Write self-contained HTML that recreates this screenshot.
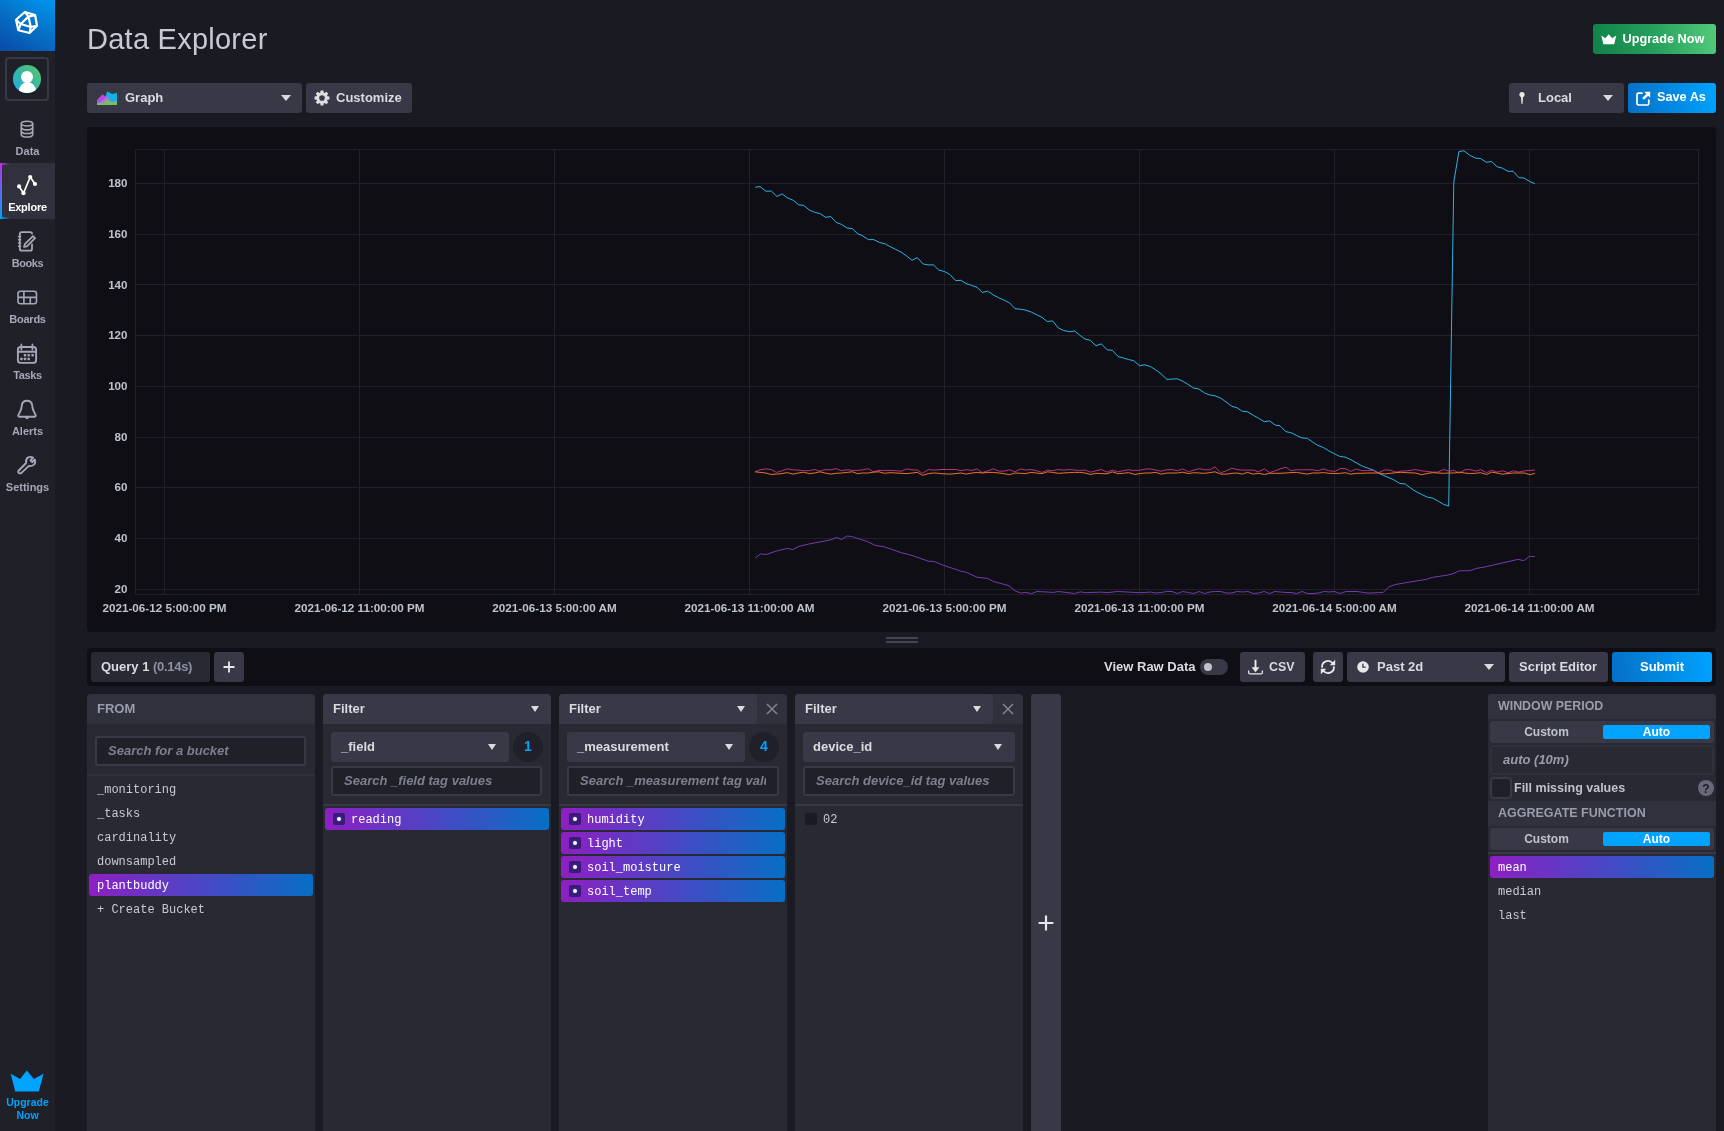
<!DOCTYPE html>
<html><head><meta charset="utf-8">
<style>
*{box-sizing:border-box;margin:0;padding:0}
html,body{width:1724px;height:1131px;overflow:hidden;-webkit-font-smoothing:antialiased;background:#1a1a22;font-family:"Liberation Sans",sans-serif;color:#c6cad3}
.a{position:absolute}
#root{position:absolute;left:0;top:0;width:1724px;height:1131px;will-change:transform}
.sb{left:0;top:0;width:55px;height:1131px;background:#202028}
.nav{left:0;width:55px;text-align:center;font-weight:bold;font-size:11px;color:#a4a8b6}
.nav .lb{position:absolute;left:0;width:55px;text-align:center;line-height:12px}
.btn{background:#383846;border-radius:3px}
.txt13{font-size:13px;font-weight:bold;line-height:15px;white-space:nowrap}
.panel{background:#292933;border-radius:4px 4px 0 0;top:694px;height:437px;width:228px}
.phdr{left:0;top:0;width:100%;height:30px;background:#31313d;border-radius:4px 4px 0 0}
.dd{background:#383846;border-radius:3px}
.inp{border:2px solid #383846;background:#202028;border-radius:3px}
.mono{font-family:"Liberation Mono",monospace;font-size:12px;white-space:nowrap}
.sel{background:linear-gradient(90deg,#8e1fc3,#066fc5);border-radius:3px}
.caret{width:0;height:0;border-left:5px solid transparent;border-right:5px solid transparent;border-top:6px solid #d9dbe1}
.ylab{left:60px;width:67.5px;text-align:right;font-size:11.6px;font-weight:bold;line-height:15px;color:#bec2cc}
.xlab{top:600px;width:200px;text-align:center;font-size:11.7px;font-weight:bold;line-height:15px;color:#bec2cc}
</style></head><body><div id="root">

<!-- SIDEBAR -->
<div class="a sb"></div>
<div class="a" style="left:0;top:0;width:55px;height:51px;background:linear-gradient(30deg,#0a4aa6 0%,#066fc5 50%,#0098f0 100%)"></div>
<svg class="a" style="left:0;top:0" width="55" height="51" viewBox="0 0 55 51">
 <g fill="none" stroke="#fff" stroke-width="2.2" stroke-linejoin="round">
  <path d="M24.86 11.97 L35.08 15.06 L37.00 25.80 L29.57 33.02 L18.36 30.23 L16.04 19.80 Z"/>
  <path d="M28.42 16.61 L30.80 27.04 L20.68 24.04 Z"/>
  <path d="M24.86 11.97 L28.42 16.61 L35.08 15.06 M16.04 19.80 L20.68 24.04 L18.36 30.23 M37.00 25.80 L30.80 27.04 L29.57 33.02"/>
 </g>
</svg>
<div class="a" style="left:5px;top:57px;width:44px;height:44px;border:2px solid #383846;border-radius:4px"></div>
<div class="a" style="left:13px;top:65px;width:28px;height:28px;border-radius:50%;background:linear-gradient(225deg,#5ecb6b 0%,#34b8a0 50%,#22adf6 100%);overflow:hidden">
 <div class="a" style="left:8px;top:5.5px;width:12px;height:12px;border-radius:50%;background:#fff"></div>
 <div class="a" style="left:5.5px;top:16.5px;width:17px;height:18px;border-radius:50%;background:#fff"></div>
 <div class="a" style="left:12px;top:15px;width:4px;height:3px;background:#fff"></div>
</div>

<!-- nav: Data -->
<svg class="a" style="left:17px;top:119px" width="20" height="20" viewBox="0 0 20 20">
 <g fill="none" stroke="#a4a8b6" stroke-width="1.6">
  <ellipse cx="10" cy="4.6" rx="5.7" ry="2.4"/>
  <path d="M4.3 4.6 V15.4 C4.3 16.9 6.8 18 10 18 C13.2 18 15.7 16.9 15.7 15.4 V4.6"/>
  <path d="M4.3 8.3 C4.3 9.8 6.8 10.9 10 10.9 C13.2 10.9 15.7 9.8 15.7 8.3"/>
  <path d="M4.3 11.9 C4.3 13.4 6.8 14.5 10 14.5 C13.2 14.5 15.7 13.4 15.7 11.9"/>
 </g>
</svg>
<div class="a nav" style="top:145px"><span class="lb">Data</span></div>

<!-- nav: Explore (active) -->
<div class="a" style="left:0;top:163px;width:55px;height:56px;background:#31313d"></div>
<div class="a" style="left:0;top:163px;width:2px;height:56px;background:linear-gradient(180deg,#be2ee4,#00a3ff)"></div>
<div class="a" style="left:0;top:163px;width:10px;height:2px;background:linear-gradient(90deg,#be2ee4,rgba(190,46,228,0))"></div>
<div class="a" style="left:0;top:217px;width:10px;height:2px;background:linear-gradient(90deg,#00a3ff,rgba(0,163,255,0))"></div>
<svg class="a" style="left:15px;top:173px" width="24" height="24" viewBox="0 0 24 24">
 <g fill="#fff" stroke="none">
  <path d="M4.1 13.4 L8.5 20.2 L15.2 4 L20 11" fill="none" stroke="#fff" stroke-width="1.7" stroke-linejoin="round"/>
  <circle cx="4.1" cy="13.4" r="2.1"/><circle cx="8.5" cy="20.2" r="2.1"/><circle cx="15.2" cy="4" r="2.1"/><circle cx="20" cy="11" r="2.1"/>
 </g>
</svg>
<div class="a nav" style="top:201px;color:#fff"><span class="lb" style="letter-spacing:-0.23px">Explore</span></div>

<!-- nav: Books -->
<svg class="a" style="left:12px;top:226px" width="30" height="30" viewBox="0 0 30 30">
 <g fill="none" stroke="#a4a8b6" stroke-width="1.8" stroke-linejoin="round" stroke-linecap="round">
  <path d="M20 7.6 Q20 6.1 18 6.1 H9.8 Q7.8 6.1 7.8 8.1 V22.7 Q7.8 24.7 9.8 24.7 H18 Q20 24.7 20 22.7 V18.4"/>
  <path d="M12.1 21 L12.81 18.17 L20.94 10.04 L23.06 12.16 L14.93 20.29 Z"/>
 </g>
 <g stroke="#a4a8b6" stroke-width="1.5" stroke-linecap="round"><path d="M6.6 10.6 H8.6 M6.6 13.8 H8.6 M6.6 17 H8.6 M6.6 20.2 H8.6"/></g>
</svg>
<div class="a nav" style="top:257px"><span class="lb" style="letter-spacing:-0.44px">Books</span></div>

<!-- nav: Boards -->
<svg class="a" style="left:16px;top:287px" width="22" height="20" viewBox="0 0 22 20">
 <g fill="none" stroke="#a4a8b6" stroke-width="1.6" stroke-linejoin="round">
  <rect x="2" y="4.2" width="18.5" height="12.5" rx="2.5"/>
  <path d="M2 10.4 H20.5 M7.9 4.2 V16.7 M14.3 10.4 V16.7"/>
 </g>
</svg>
<div class="a nav" style="top:313px"><span class="lb" style="letter-spacing:-0.23px">Boards</span></div>

<!-- nav: Tasks -->
<svg class="a" style="left:12px;top:338px" width="30" height="30" viewBox="0 0 30 30">
 <g fill="none" stroke="#a4a8b6" stroke-width="1.9" stroke-linejoin="round" stroke-linecap="round">
  <rect x="5.9" y="9" width="18.2" height="15.9" rx="2.6"/>
  <path d="M5.9 13.7 H24.1"/>
  <path d="M9.4 6.4 V11.6 M20.4 6.4 V11.6" stroke-width="1.7"/>
 </g>
 <g fill="#a4a8b6"><rect x="11.8" y="16.0" width="2.4" height="2.4" rx="0.4"/><rect x="15.5" y="16.0" width="2.4" height="2.4" rx="0.4"/><rect x="19.4" y="16.0" width="2.4" height="2.4" rx="0.4"/><rect x="8.2" y="19.8" width="2.4" height="2.4" rx="0.4"/><rect x="11.8" y="19.8" width="2.4" height="2.4" rx="0.4"/><rect x="15.5" y="19.8" width="2.4" height="2.4" rx="0.4"/></g>
</svg>
<div class="a nav" style="top:369px"><span class="lb" style="letter-spacing:-0.38px">Tasks</span></div>

<!-- nav: Alerts -->
<svg class="a" style="left:12px;top:394px" width="30" height="30" viewBox="0 0 30 30">
 <g fill="none" stroke="#a4a8b6" stroke-width="1.9" stroke-linejoin="round">
  <path d="M7.9 22.8 H22.1 Q24.4 22.8 23.5 20.8 L21.7 17.2 Q20.4 14.6 20.2 11.5 Q19.8 6.8 15 6.8 Q10.2 6.8 9.8 11.5 Q9.6 14.6 8.3 17.2 L6.5 20.8 Q5.6 22.8 7.9 22.8 Z"/>
 </g>
 <path d="M13.1 22.8 Q13.3 25.3 15 25.3 Q16.7 25.3 16.9 22.8 Z" fill="#a4a8b6"/>
</svg>
<div class="a nav" style="top:425px"><span class="lb">Alerts</span></div>

<!-- nav: Settings -->
<svg class="a" style="left:12px;top:450px" width="30" height="30" viewBox="0 0 30 30">
 <g fill="none" stroke="#a4a8b6" stroke-width="1.9" stroke-linejoin="round" stroke-linecap="round">
  <path d="M7.3 23.2 Q6.0 23.0 6.3 21.0 L14.1 13.0 Q13.6 8.8 16.2 7.4 Q18.6 6.3 21.0 7.6 L18.5 10.3 L20.2 12.0 L22.7 9.4 Q24.0 12.5 22.0 14.6 Q19.7 16.6 16.9 15.9 L8.9 23.4 Q8.2 23.5 7.3 23.2 Z"/>
 </g>
</svg>
<div class="a nav" style="top:481px"><span class="lb">Settings</span></div>

<!-- sidebar upgrade -->
<svg class="a" style="left:10px;top:1069px" width="34" height="24" viewBox="0 0 34 24">
 <path d="M0.7 4.8 L10.1 9.9 L16.8 1.4 L23.75 9.9 L33.5 4.8 L28.8 22.6 H5.2 Z" fill="#00a3ff"/>
</svg>
<div class="a" style="left:0;top:1096px;width:55px;text-align:center;font-weight:bold;font-size:10.5px;line-height:13px;color:#00a3ff">Upgrade<br>Now</div>
<!-- HEADER -->
<div class="a" style="left:87px;top:22px;font-size:29px;line-height:34px;letter-spacing:0.25px;color:#c6cad3;white-space:nowrap">Data Explorer</div>
<div class="a" style="left:1593px;top:24px;width:123px;height:30px;border-radius:3px;background:linear-gradient(80deg,#0f8148 0%,#27a05c 50%,#52cb7a 100%)"></div>
<svg class="a" style="left:1601px;top:34px" width="16" height="11" viewBox="0 0 16 11">
 <path d="M0.3 1.6 L4.3 4.3 L7.7 0.2 L11.2 4.3 L15.2 1.6 L13.2 10.3 H2.4 Z" fill="#fff"/>
</svg>
<div class="a txt13" style="left:1622.5px;top:32px;font-size:12.7px;color:#fff">Upgrade Now</div>

<!-- TOOLBAR -->
<div class="a btn" style="left:87px;top:83px;width:215px;height:30px"></div>
<svg class="a" style="left:97px;top:91px" width="20" height="14" viewBox="0 0 20 14">
 <path d="M8.3 6 L10.3 0.3 L12 1.5 L15.5 3 L20 1.8 V14 H8.3 Z" fill="#12b2e6"/>
 <path d="M0 9 L5.5 3.3 L7.5 5 L10 5.5 L13 9 L15 11.5 L0 14 Z" fill="#b84be0"/>
 <path d="M0 12.5 L4 10.5 L7 8 L10 5.2 L13 9 L15 11.5 L17 10 L20 10 V14 H0 Z" fill="#a87ae0"/>
 <path d="M0 11.8 L4 12 L6 12.3 L10 8.8 L13 10.3 L15 11.2 L18 10.8 L20 10.2 V14 H0 Z" fill="#74c45e"/>
</svg>
<div class="a txt13" style="left:125px;top:90px;color:#d9dbe1">Graph</div>
<div class="a caret" style="left:281px;top:95px"></div>

<div class="a btn" style="left:306px;top:83px;width:106px;height:30px"></div>
<svg class="a" style="left:313px;top:89.2px" width="18" height="18" viewBox="0 0 18 18">
 <path fill="#dcdee4" fill-rule="evenodd" d="M7.32 3.55 L7.56 1.54 L10.44 1.54 L10.68 3.55 L11.66 3.96 L13.26 2.71 L15.29 4.74 L14.04 6.34 L14.45 7.32 L16.46 7.56 L16.46 10.44 L14.45 10.68 L14.04 11.66 L15.29 13.26 L13.26 15.29 L11.66 14.04 L10.68 14.45 L10.44 16.46 L7.56 16.46 L7.32 14.45 L6.34 14.04 L4.74 15.29 L2.71 13.26 L3.96 11.66 L3.55 10.68 L1.54 10.44 L1.54 7.56 L3.55 7.32 L3.96 6.34 L2.71 4.74 L4.74 2.71 L6.34 3.96 Z M11.8 9 A2.8 2.8 0 1 0 6.2 9 A2.8 2.8 0 1 0 11.8 9 Z"/>
</svg>
<div class="a txt13" style="left:336px;top:90px;color:#d9dbe1">Customize</div>

<div class="a btn" style="left:1509px;top:83px;width:115px;height:30px"></div>
<svg class="a" style="left:1516.5px;top:91px" width="10" height="14" viewBox="0 0 10 14">
 <circle cx="5" cy="3.5" r="2.6" fill="#e7e8eb"/><path d="M3.9 4 H6.1 L5.6 12.6 Q5 13.2 4.4 12.6 Z" fill="#e7e8eb"/>
</svg>
<div class="a txt13" style="left:1538px;top:90px;color:#d9dbe1">Local</div>
<div class="a caret" style="left:1603px;top:95px"></div>

<div class="a" style="left:1628px;top:83px;width:88px;height:30px;border-radius:3px;background:linear-gradient(80deg,#066fc5 0%,#00a3ff 100%)"></div>
<svg class="a" style="left:1636px;top:91px" width="15" height="15" viewBox="0 0 15 15">
 <g fill="none" stroke="#fff" stroke-width="1.7" stroke-linejoin="round" stroke-linecap="round"><path d="M6 2.2 H2.6 Q1 2.2 1 3.8 V12.4 Q1 14 2.6 14 H11.2 Q12.8 14 12.8 12.4 V9"/></g>
 <path d="M8.2 0.8 H14.2 V6.8 L12.1 4.7 L8 8.8 L6.2 7 L10.3 2.9 Z" fill="#fff"/>
</svg>
<div class="a txt13" style="left:1657px;top:90px;font-size:12.7px;color:#fff">Save As</div>

<!-- CHART -->
<div class="a" style="left:87px;top:127px;width:1629px;height:505px;background:#0f0e15;border-radius:4px"></div>
<svg class="a" style="left:0;top:0" width="1724" height="640" viewBox="0 0 1724 640"><g stroke="#202028" stroke-width="1" fill="none"><rect x="135.5" y="149.5" width="1563" height="445"/><path d="M135.5 589.5 H1698.5"/><path d="M135.5 538.5 H1698.5"/><path d="M135.5 487.5 H1698.5"/><path d="M135.5 437.5 H1698.5"/><path d="M135.5 386.5 H1698.5"/><path d="M135.5 335.5 H1698.5"/><path d="M135.5 284.5 H1698.5"/><path d="M135.5 234.5 H1698.5"/><path d="M135.5 183.5 H1698.5"/><path d="M164.5 149.5 V594.5"/><path d="M359.5 149.5 V594.5"/><path d="M554.5 149.5 V594.5"/><path d="M749.5 149.5 V594.5"/><path d="M944.5 149.5 V594.5"/><path d="M1139.5 149.5 V594.5"/><path d="M1334.5 149.5 V594.5"/><path d="M1529.5 149.5 V594.5"/></g></svg>
<div class="a ylab" style="top:580.8px">20</div><div class="a ylab" style="top:530.1px">40</div><div class="a ylab" style="top:479.4px">60</div><div class="a ylab" style="top:428.6px">80</div><div class="a ylab" style="top:377.9px">100</div><div class="a ylab" style="top:327.2px">120</div><div class="a ylab" style="top:276.5px">140</div><div class="a ylab" style="top:225.8px">160</div><div class="a ylab" style="top:175.0px">180</div><div class="a xlab" style="left:64.5px">2021-06-12 5:00:00 PM</div><div class="a xlab" style="left:259.5px">2021-06-12 11:00:00 PM</div><div class="a xlab" style="left:454.5px">2021-06-13 5:00:00 AM</div><div class="a xlab" style="left:649.5px">2021-06-13 11:00:00 AM</div><div class="a xlab" style="left:844.5px">2021-06-13 5:00:00 PM</div><div class="a xlab" style="left:1039.5px">2021-06-13 11:00:00 PM</div><div class="a xlab" style="left:1234.5px">2021-06-14 5:00:00 AM</div><div class="a xlab" style="left:1429.5px">2021-06-14 11:00:00 AM</div><svg class="a" style="left:0;top:0" width="1724" height="640" viewBox="0 0 1724 640">
<g fill="none" stroke-width="1" stroke-linejoin="round" stroke-opacity="0.92">
<polyline stroke="#31c0f6" points="755.2,187.2 760.1,186.6 765.9,191.2 771.4,191.1 776.9,196.5 782.1,193.9 787.3,197.8 793.1,200.2 798.6,204.8 803.6,205.4 809.4,210 814.6,212.3 819.8,213.5 825.6,217.3 830.8,216.6 836.1,222.4 841.3,224.3 847.1,228 852.3,228.6 857.5,233.6 862.7,235.9 868.5,239.6 873.8,239.6 879.6,242.6 884.8,243.7 890,246.6 895.8,249.5 901,252 906.8,256.1 912,260.3 917.3,257.6 923.1,264 928.3,264.9 933.5,264.9 938.7,270 944.1,271.4 949.9,274.5 955.7,280.6 960.9,280.3 966.1,283.5 971.3,285.3 977.1,287.3 982.3,292.5 987.6,291.1 993.4,295 998.6,297.7 1003.8,300 1009.6,302.9 1014.8,308.5 1020.6,309.3 1025.8,310.1 1031.6,312.2 1036.9,314.8 1042.1,317.4 1047.3,321.5 1052.5,320.9 1058.3,327.9 1063.5,330.5 1069.3,331.7 1074.6,331 1079.8,335.2 1085,339.1 1090.2,340.3 1096,345.8 1101.3,343.8 1107.1,349.9 1112.3,350.3 1118.1,356.5 1123.3,358 1128.5,359.5 1133.7,360.7 1139.6,365.7 1144.9,364.9 1150.7,366.6 1155.9,370.1 1161.1,373.8 1166.9,379.4 1172.1,379.1 1177.3,378.8 1182.6,381.1 1187.8,384.2 1193.6,388.1 1198.8,388.9 1204.6,393 1209.8,395 1215,395.8 1220.8,398.2 1226.1,402 1231.9,406.3 1237.1,407.8 1242.3,411.3 1247.5,411.8 1253.3,415.3 1258.5,418.2 1264.3,421.7 1269.6,420.9 1275.4,425.2 1280,425.8 1285.8,431.6 1291,432.7 1296.3,435.3 1302.1,438 1307.3,438.3 1312.5,442 1317.7,445.3 1323.5,447.6 1328.7,450.7 1334.5,453.8 1339.6,456.3 1345.3,457.2 1351.1,459.8 1356.8,463.2 1362.5,466.2 1368.3,468.3 1373.4,470 1379.1,473.4 1384.9,476 1393.8,479.8 1399.6,483.4 1405.3,484 1410.4,487.9 1416.1,491.7 1421.9,494.6 1427.6,497.2 1432.7,498.1 1438.5,501.3 1443.6,504.4 1448.7,506.1 1453.8,182.1 1458.9,151.5 1464,150.8 1469.7,155.3 1475.5,158.1 1480.6,158.5 1486.3,162.3 1491.4,161.4 1497.2,166.8 1502.3,168.1 1508,171.3 1513.1,171.3 1518.9,177.6 1524,178 1529.7,181.5 1534.8,183.6"/>
<polyline stroke="#7e40c0" points="755.2,558.1 760.7,553.8 765.9,554.6 776.3,551.1 787.3,548.4 792.6,549.6 798.4,546.5 809.4,543.9 820.4,541.8 830.8,539.8 836.6,537.4 841.3,539.5 847.1,536 852.3,536.6 868,541.8 874.9,545.3 884.2,546.8 901.6,552.8 912,555.4 928.3,561.2 934.1,561.5 944.5,565.6 960.9,571.2 966.1,572.2 977.1,577.3 987.6,578.4 993.4,581.5 1009,585.7 1014.8,590.7 1020.6,593 1025.8,592.4 1031.6,593.6 1036.9,591.5 1053.7,592.4 1058.3,591.5 1074.6,593.5 1080.4,591.9 1085,592.7 1101.3,592.1 1107.1,592.7 1117.5,591.5 1139.5,592.7 1144.9,592.5 1150.3,592.0 1155.8,593.0 1161.2,592.5 1166.6,591.5 1172.0,591.5 1177.4,593.5 1182.9,591.5 1188.3,592.5 1193.7,593.5 1199.1,591.5 1204.5,593.5 1210.0,592.0 1215.4,591.5 1220.8,591.5 1226.2,593.0 1231.6,593.0 1237.1,591.5 1242.5,592.0 1247.9,591.5 1253.3,593.5 1258.7,593.0 1264.2,591.5 1269.6,593.5 1275.0,591.5 1280.4,592.0 1285.8,592.5 1291.3,592.5 1296.7,593.5 1302.1,591.5 1307.5,593.5 1312.9,593.5 1318.4,593.0 1323.8,591.5 1329.2,592.0 1334.6,591.5 1340.0,593.5 1340,593.5 1346.1,591.5 1357.1,591.5 1368,593.1 1383.2,592.5 1388.7,587 1394.8,584.6 1410,582 1426.5,579.3 1432.6,577.3 1447.2,575.2 1453.3,573.6 1459.4,570.8 1470.3,570.6 1476.4,568.4 1486.2,566.7 1500,563.5 1517.8,559.4 1523.9,560.6 1529.4,556.3 1534.9,556.6"/>
<polyline stroke="#c8368a" points="755.2,471.8 760.1,469.8 765.9,468.9 771.1,469.5 776.3,472.4 782.1,470.7 787.3,468.9 793.1,469.8 798.4,470.1 803.6,470.7 809.4,470.7 814.6,469.5 819.8,471.2 825.0,469.7 830.8,469.8 836.1,468.7 841.3,470.7 847.1,469.8 852.3,470.4 857.5,470.4 862.7,469.8 868.5,468.7 873.2,471.8 879.0,470.4 884.2,470.4 890.0,470.4 895.8,470.7 901.0,471.2 906.8,468.9 912.1,469.8 917.3,470.1 922.5,473.3 928.3,469.5 933.5,470.1 938.7,469.8 940.0,469.5 949.9,469.5 955.7,469.5 960.9,470.7 966.1,469.7 971.9,470.4 977.1,468.9 982.3,472.6 988.1,470.7 993.4,468.9 999.2,471.2 1004.4,471.0 1009.6,469.8 1014.8,471.8 1020.6,468.9 1025.8,470.1 1031.1,469.5 1036.3,470.7 1042.1,472.4 1047.3,470.1 1052.5,470.7 1058.3,469.5 1063.5,470.1 1069.4,469.5 1074.6,470.1 1079.8,470.4 1085.0,470.1 1090.8,472.2 1096.0,470.7 1101.3,469.5 1107.1,472.2 1112.3,470.1 1117.5,471.8 1123.3,470.7 1128.5,469.7 1133.7,470.7 1135.0,470.3 1139.6,470.3 1144.9,469.2 1150.1,468.9 1155.9,470.1 1161.1,471.2 1166.9,469.8 1172.1,469.6 1177.3,470.7 1182.6,468.9 1188.4,471.8 1193.6,470.1 1199.4,468.7 1204.6,469.8 1209.8,469.8 1215.0,466.8 1220.8,472.7 1226.6,470.7 1231.9,468.3 1237.1,469.5 1242.3,470.1 1247.5,470.1 1253.3,470.1 1258.5,471.8 1264.4,468.9 1269.6,472.6 1274.8,471.0 1280.0,468.9 1285.8,467.2 1291.0,470.7 1296.3,469.8 1302.1,469.8 1307.3,469.7 1312.5,469.8 1318.3,470.7 1323.5,468.9 1328.7,470.7 1335.0,471.4 1340.5,468.4 1345.4,468.6 1350.8,471.4 1356.3,469.0 1361.8,470.6 1367.3,470.6 1372.8,470.2 1378.2,472.7 1384.9,469.9 1390.4,470.2 1395.9,472.1 1401.4,471.1 1406.9,470.8 1415.4,469.6 1421.5,470.8 1427.0,471.4 1432.4,472.1 1437.9,472.1 1443.4,469.4 1448.9,471.1 1454.4,470.5 1459.2,473.3 1464.7,469.9 1469.6,469.4 1475.7,471.1 1480.6,469.6 1486.6,472.7 1491.5,470.2 1497.0,472.1 1502.5,470.8 1508.0,472.7 1513.4,470.8 1518.9,472.1 1524.4,470.8 1529.9,470.6 1534.8,469.9"/>
<polyline stroke="#ff7e27" points="755.2,471.8 760.1,472.4 765.9,473.0 771.1,474.5 776.3,474.1 782.1,473.6 787.3,472.6 793.1,474.1 798.4,473.0 803.6,472.2 809.4,473.6 814.6,473.0 819.8,471.8 825.0,473.0 830.8,474.1 836.1,473.3 841.3,473.0 847.1,472.4 852.3,471.8 857.5,473.6 862.7,473.0 868.5,473.0 873.2,472.2 879.0,471.8 884.2,473.3 890.0,472.7 895.8,473.0 901.0,473.3 906.8,473.6 912.1,473.0 917.3,472.4 922.5,475.3 928.3,473.6 933.5,473.0 938.7,473.3 940.0,473.6 949.9,474.1 955.7,473.6 960.9,473.0 966.1,474.1 971.9,473.0 977.1,472.4 982.3,473.0 988.1,472.4 993.4,472.4 999.2,473.0 1004.4,473.8 1009.6,474.7 1014.8,473.0 1020.6,473.3 1025.8,473.6 1031.1,472.4 1036.3,473.0 1042.1,473.6 1047.3,471.8 1052.5,472.4 1058.3,473.3 1063.5,473.0 1069.4,472.6 1074.6,472.4 1079.8,472.4 1085.0,473.0 1090.8,474.5 1096.0,473.3 1101.3,473.6 1107.1,473.8 1112.3,471.8 1117.5,473.6 1123.3,473.3 1128.5,472.6 1133.7,474.1 1135.0,474.5 1139.6,473.6 1144.9,473.0 1150.1,473.0 1155.9,472.4 1161.1,474.1 1166.9,473.0 1172.1,473.0 1177.3,473.0 1182.6,472.2 1188.4,473.6 1193.6,472.7 1199.4,473.0 1204.6,473.3 1209.8,472.6 1215.0,471.8 1220.8,474.1 1226.6,474.1 1231.9,473.3 1237.1,473.0 1242.3,474.1 1247.5,472.4 1253.3,474.1 1258.5,473.3 1264.4,474.5 1269.6,473.3 1274.8,473.3 1280.0,473.3 1285.8,473.0 1291.0,472.6 1296.3,472.4 1302.1,473.3 1307.3,474.1 1312.5,473.0 1318.3,473.0 1323.5,472.6 1328.7,473.3 1335.0,473.5 1340.5,473.3 1345.4,472.7 1350.8,474.2 1356.3,473.3 1361.8,473.3 1367.3,473.0 1372.8,473.0 1378.2,473.0 1384.9,473.9 1390.4,473.3 1395.9,472.7 1401.4,472.3 1406.9,472.7 1415.4,473.0 1421.5,474.7 1427.0,473.5 1432.4,472.7 1437.9,473.0 1443.4,473.3 1448.9,473.0 1454.4,473.0 1459.2,472.1 1464.7,473.0 1469.6,473.5 1475.7,473.3 1480.6,472.7 1486.6,474.5 1491.5,472.1 1497.0,473.0 1502.5,474.2 1508.0,473.5 1513.4,473.0 1518.9,473.0 1524.4,473.0 1529.9,474.7 1534.8,473.3"/>
</g></svg><!-- resize handle -->
<div class="a" style="left:886px;top:637px;width:32px;height:1.5px;background:#434453"></div>
<div class="a" style="left:886px;top:641px;width:32px;height:1.5px;background:#434453"></div>

<!-- QUERY BAR -->
<div class="a" style="left:87px;top:648px;width:1629px;height:38px;background:#0f0e15;border-radius:4px"></div>
<div class="a" style="left:91px;top:652px;width:119px;height:30px;background:#292933;border-radius:3px"></div>
<div class="a txt13" style="left:101px;top:659px;color:#d9dbe1">Query 1 <span style="color:#8e91a1;letter-spacing:-0.3px">(0.14s)</span></div>
<div class="a btn" style="left:214px;top:652px;width:30px;height:30px"></div>
<svg class="a" style="left:221px;top:659px" width="16" height="16" viewBox="0 0 16 16"><path d="M8 2.5 V13.5 M2.5 8 H13.5" stroke="#e7e8eb" stroke-width="1.8"/></svg>

<div class="a txt13" style="left:1104px;top:659px;color:#d9dbe1">View Raw Data</div>
<div class="a" style="left:1200px;top:659px;width:28px;height:16px;border-radius:8px;background:#383846"></div>
<div class="a" style="left:1203.5px;top:663px;width:8px;height:8px;border-radius:50%;background:#bec2cc"></div>

<div class="a btn" style="left:1240px;top:652px;width:65px;height:30px"></div>
<svg class="a" style="left:1247px;top:659px" width="17" height="16" viewBox="0 0 17 16">
 <path d="M8.5 0.8 V10" stroke="#e7e8eb" stroke-width="1.9"/><path d="M4.6 8.2 L8.5 13.2 L12.4 8.2 Z" fill="#e7e8eb"/>
 <path d="M1.6 11.6 V13.4 Q1.6 14.9 3.1 14.9 H13.9 Q15.4 14.9 15.4 13.4 V11.6" fill="none" stroke="#e7e8eb" stroke-width="1.3"/>
</svg>
<div class="a txt13" style="left:1269px;top:660px;font-size:12.4px;color:#d9dbe1">CSV</div>

<div class="a btn" style="left:1313px;top:652px;width:30px;height:30px"></div>
<svg class="a" style="left:1320px;top:659px" width="16" height="16" viewBox="0 0 16 16">
 <g fill="none" stroke="#e7e8eb" stroke-width="1.8"><path d="M2.2 8.6 A5.8 5.8 0 0 1 12.6 4.3"/><path d="M13.8 7.4 A5.8 5.8 0 0 1 3.4 11.7"/></g>
 <path d="M15.2 0.7 V6.2 H9.7 Z" fill="#e7e8eb"/><path d="M0.8 15.3 V9.8 H6.3 Z" fill="#e7e8eb"/>
</svg>

<div class="a btn" style="left:1347px;top:652px;width:158px;height:30px"></div>
<svg class="a" style="left:1357px;top:661px" width="12" height="12" viewBox="0 0 12 12">
 <circle cx="6" cy="6" r="5.8" fill="#e7e8eb"/><path d="M5.9 2.8 V6.2 H8.6" fill="none" stroke="#383846" stroke-width="1.3"/>
</svg>
<div class="a txt13" style="left:1377px;top:659px;color:#d9dbe1">Past 2d</div>
<div class="a caret" style="left:1484px;top:664px"></div>

<div class="a btn" style="left:1509px;top:652px;width:99px;height:30px"></div>
<div class="a txt13" style="left:1519px;top:659px;color:#d9dbe1">Script Editor</div>
<div class="a" style="left:1612px;top:652px;width:100px;height:30px;border-radius:3px;background:linear-gradient(80deg,#066fc5 0%,#00a3ff 100%)"></div>
<div class="a txt13" style="left:1640px;top:659px;color:#fff">Submit</div>

<!-- PANELS -->
<!-- FROM -->
<div class="a panel" style="left:87px"></div>
<div class="a phdr" style="left:87px;top:694px;width:228px"></div>
<div class="a txt13" style="left:97px;top:701px;color:#999dab">FROM</div>
<div class="a inp" style="left:95px;top:736px;width:211px;height:30px"></div>
<div class="a" style="left:108px;top:742px;font-size:13px;font-weight:bold;font-style:italic;line-height:17px;color:#7c7f8e;white-space:nowrap">Search for a bucket</div>
<div class="a" style="left:87px;top:774px;width:228px;height:2px;background:#31313d"></div>
<div class="a mono" style="left:97px;top:783px;color:#c6cad3">_monitoring</div>
<div class="a mono" style="left:97px;top:807px;color:#c6cad3">_tasks</div>
<div class="a mono" style="left:97px;top:831px;color:#c6cad3">cardinality</div>
<div class="a mono" style="left:97px;top:855px;color:#c6cad3">downsampled</div>
<div class="a sel" style="left:89px;top:874px;width:224px;height:22px"></div>
<div class="a mono" style="left:97px;top:879px;color:#fff">plantbuddy</div>
<div class="a mono" style="left:97px;top:903px;color:#c6cad3">+ Create Bucket</div>

<!-- Filter 1 -->
<div class="a panel" style="left:323px"></div>
<div class="a phdr" style="left:323px;top:694px;width:228px;background:#383846"></div>
<div class="a txt13" style="left:333px;top:701px;color:#d9dbe1">Filter</div>
<div class="a caret" style="left:531px;top:706px;border-left-width:4.8px;border-right-width:4.8px;border-top-width:6px"></div>
<div class="a dd" style="left:331px;top:732px;width:178px;height:30px"></div>
<div class="a txt13" style="left:341px;top:739px;color:#d9dbe1">_field</div>
<div class="a caret" style="left:488px;top:744px;border-left-width:4.8px;border-right-width:4.8px;border-top-width:6px"></div>
<div class="a" style="left:513px;top:732px;width:30px;height:30px;border-radius:50%;background:#202028"></div>
<div class="a txt13" style="left:513px;top:738px;width:30px;text-align:center;font-size:14px;line-height:17px;color:#00a3ff">1</div>
<div class="a inp" style="left:331px;top:766px;width:211px;height:30px"></div>
<div class="a" style="left:344px;top:772px;font-size:13px;font-weight:bold;font-style:italic;line-height:17px;color:#7c7f8e;white-space:nowrap">Search _field tag values</div>
<div class="a" style="left:323px;top:804px;width:228px;height:2px;background:#383846"></div>
<div class="a sel" style="left:325px;top:808px;width:224px;height:22px"></div>
<div class="a" style="left:333px;top:813px;width:12px;height:12px;border-radius:2px;background:#3b1a78"></div>
<div class="a" style="left:336.6px;top:816.6px;width:4.8px;height:4.8px;border-radius:50%;background:#fff;box-shadow:0 0 0 1px rgba(60,60,200,0.45)"></div>
<div class="a mono" style="left:351px;top:813px;color:#fff">reading</div>

<!-- Filter 2 -->
<div class="a panel" style="left:559px"></div>
<div class="a phdr" style="left:559px;top:694px;width:228px"></div>
<div class="a" style="left:559px;top:694px;width:198px;height:30px;background:#383846;border-radius:4px 4px 4px 0"></div>
<div class="a txt13" style="left:569px;top:701px;color:#d9dbe1">Filter</div>
<div class="a caret" style="left:737px;top:706px;border-left-width:4.7px;border-right-width:4.7px;border-top-width:6px"></div>
<svg class="a" style="left:765px;top:702px" width="14" height="14" viewBox="0 0 14 14"><path d="M2 2 L12 12 M12 2 L2 12" stroke="#7c7f8f" stroke-width="1.7"/></svg>
<div class="a dd" style="left:567px;top:732px;width:178px;height:30px"></div>
<div class="a txt13" style="left:577px;top:739px;color:#d9dbe1">_measurement</div>
<div class="a caret" style="left:725px;top:744px;border-left-width:4.7px;border-right-width:4.7px;border-top-width:6px"></div>
<div class="a" style="left:749px;top:732px;width:30px;height:30px;border-radius:50%;background:#202028"></div>
<div class="a txt13" style="left:749px;top:738px;width:30px;text-align:center;font-size:14px;line-height:17px;color:#00a3ff">4</div>
<div class="a inp" style="left:567px;top:766px;width:212px;height:30px"></div><div class="a" style="left:569px;top:768px;width:197px;height:26px;overflow:hidden"><div style="position:absolute;left:11px;top:4px;font-size:13px;font-weight:bold;font-style:italic;line-height:17px;color:#7c7f8e;white-space:nowrap">Search _measurement tag values</div></div>
<div class="a" style="left:559px;top:804px;width:228px;height:2px;background:#383846"></div>
<div class="a sel" style="left:561px;top:808px;width:224px;height:22px"></div>
<div class="a sel" style="left:561px;top:832px;width:224px;height:22px"></div>
<div class="a sel" style="left:561px;top:856px;width:224px;height:22px"></div>
<div class="a sel" style="left:561px;top:880px;width:224px;height:22px"></div>
<div class="a" style="left:569px;top:813px;width:12px;height:12px;border-radius:2px;background:#3b1a78"></div>
<div class="a" style="left:572.6px;top:816.6px;width:4.8px;height:4.8px;border-radius:50%;background:#fff;box-shadow:0 0 0 1px rgba(60,60,200,0.45)"></div>
<div class="a" style="left:569px;top:837px;width:12px;height:12px;border-radius:2px;background:#3b1a78"></div>
<div class="a" style="left:572.6px;top:840.6px;width:4.8px;height:4.8px;border-radius:50%;background:#fff;box-shadow:0 0 0 1px rgba(60,60,200,0.45)"></div>
<div class="a" style="left:569px;top:861px;width:12px;height:12px;border-radius:2px;background:#3b1a78"></div>
<div class="a" style="left:572.6px;top:864.6px;width:4.8px;height:4.8px;border-radius:50%;background:#fff;box-shadow:0 0 0 1px rgba(60,60,200,0.45)"></div>
<div class="a" style="left:569px;top:885px;width:12px;height:12px;border-radius:2px;background:#3b1a78"></div>
<div class="a" style="left:572.6px;top:888.6px;width:4.8px;height:4.8px;border-radius:50%;background:#fff;box-shadow:0 0 0 1px rgba(60,60,200,0.45)"></div>
<div class="a mono" style="left:587px;top:813px;color:#fff">humidity</div>
<div class="a mono" style="left:587px;top:837px;color:#fff">light</div>
<div class="a mono" style="left:587px;top:861px;color:#fff">soil_moisture</div>
<div class="a mono" style="left:587px;top:885px;color:#fff">soil_temp</div>

<!-- Filter 3 -->
<div class="a panel" style="left:795px"></div>
<div class="a phdr" style="left:795px;top:694px;width:228px"></div>
<div class="a" style="left:795px;top:694px;width:198px;height:30px;background:#383846;border-radius:4px 4px 4px 0"></div>
<div class="a txt13" style="left:805px;top:701px;color:#d9dbe1">Filter</div>
<div class="a caret" style="left:973px;top:706px;border-left-width:4.7px;border-right-width:4.7px;border-top-width:6px"></div>
<svg class="a" style="left:1001px;top:702px" width="14" height="14" viewBox="0 0 14 14"><path d="M2 2 L12 12 M12 2 L2 12" stroke="#7c7f8f" stroke-width="1.7"/></svg>
<div class="a dd" style="left:803px;top:732px;width:212px;height:30px"></div>
<div class="a txt13" style="left:813px;top:739px;color:#d9dbe1">device_id</div>
<div class="a caret" style="left:994px;top:744px;border-left-width:4.7px;border-right-width:4.7px;border-top-width:6px"></div>
<div class="a inp" style="left:803px;top:766px;width:212px;height:30px"></div>
<div class="a" style="left:816px;top:772px;font-size:13px;font-weight:bold;font-style:italic;line-height:17px;color:#7c7f8e;white-space:nowrap">Search device_id tag values</div>
<div class="a" style="left:795px;top:804px;width:228px;height:2px;background:#383846"></div>
<div class="a" style="left:805px;top:813px;width:12px;height:12px;border-radius:2px;background:#1a1a22"></div>
<div class="a mono" style="left:823px;top:813px;color:#c6cad3">02</div>

<!-- add column -->
<div class="a" style="left:1031px;top:694px;width:30px;height:437px;background:#383846;border-radius:3px 3px 0 0"></div>
<svg class="a" style="left:1038px;top:915px" width="16" height="16" viewBox="0 0 16 16"><path d="M8 0.6 V15.4 M0.6 8 H15.4" stroke="#e7e8eb" stroke-width="2.2"/></svg>

<!-- RIGHT PANEL -->
<div class="a panel" style="left:1488px"></div>
<div class="a" style="left:1488px;top:694px;width:228px;height:25px;background:#31313d;border-radius:3px 3px 0 0"></div>
<div class="a txt13" style="left:1498px;top:699px;font-size:12.4px;color:#999dab">WINDOW PERIOD</div>
<div class="a" style="left:1490px;top:721px;width:224px;height:22px;background:#383846;border-radius:3px"></div>
<div class="a txt13" style="left:1490px;top:725px;width:113px;text-align:center;font-size:12px;color:#bec2cc">Custom</div>
<div class="a" style="left:1603px;top:725px;width:107px;height:14px;background:#00a3ff;border-radius:2px"></div>
<div class="a txt13" style="left:1603px;top:725px;width:107px;text-align:center;font-size:12px;color:#fff">Auto</div>
<div class="a" style="left:1490px;top:745px;width:224px;height:30px;border:2px solid #31313d;border-radius:3px"></div>
<div class="a" style="left:1503px;top:751px;font-size:13px;font-weight:bold;font-style:italic;line-height:17px;color:#999dab;white-space:nowrap">auto (10m)</div>
<div class="a" style="left:1490px;top:777px;width:22px;height:22px;background:#202028;border:2px solid #383846;border-radius:4px"></div>
<div class="a txt13" style="left:1514px;top:781px;font-size:12.5px;color:#bec2cc">Fill missing values</div>
<div class="a" style="left:1698px;top:780px;width:16px;height:16px;border-radius:50%;background:#676978"></div>
<div class="a txt13" style="left:1698px;top:782px;width:16px;text-align:center;font-size:12px;color:#1a1a22">?</div>
<div class="a" style="left:1488px;top:801px;width:228px;height:25px;background:#31313d"></div>
<div class="a txt13" style="left:1498px;top:806px;font-size:12.5px;color:#999dab">AGGREGATE FUNCTION</div>
<div class="a" style="left:1490px;top:828px;width:224px;height:22px;background:#383846;border-radius:3px"></div>
<div class="a txt13" style="left:1490px;top:832px;width:113px;text-align:center;font-size:12px;color:#bec2cc">Custom</div>
<div class="a" style="left:1603px;top:832px;width:107px;height:14px;background:#00a3ff;border-radius:2px"></div>
<div class="a txt13" style="left:1603px;top:832px;width:107px;text-align:center;font-size:12px;color:#fff">Auto</div>
<div class="a" style="left:1488px;top:852px;width:228px;height:2px;background:#383846"></div>
<div class="a sel" style="left:1490px;top:856px;width:224px;height:22px"></div>
<div class="a mono" style="left:1498px;top:861px;color:#fff">mean</div>
<div class="a mono" style="left:1498px;top:885px;color:#c6cad3">median</div>
<div class="a mono" style="left:1498px;top:909px;color:#c6cad3">last</div>

</div></body></html>
